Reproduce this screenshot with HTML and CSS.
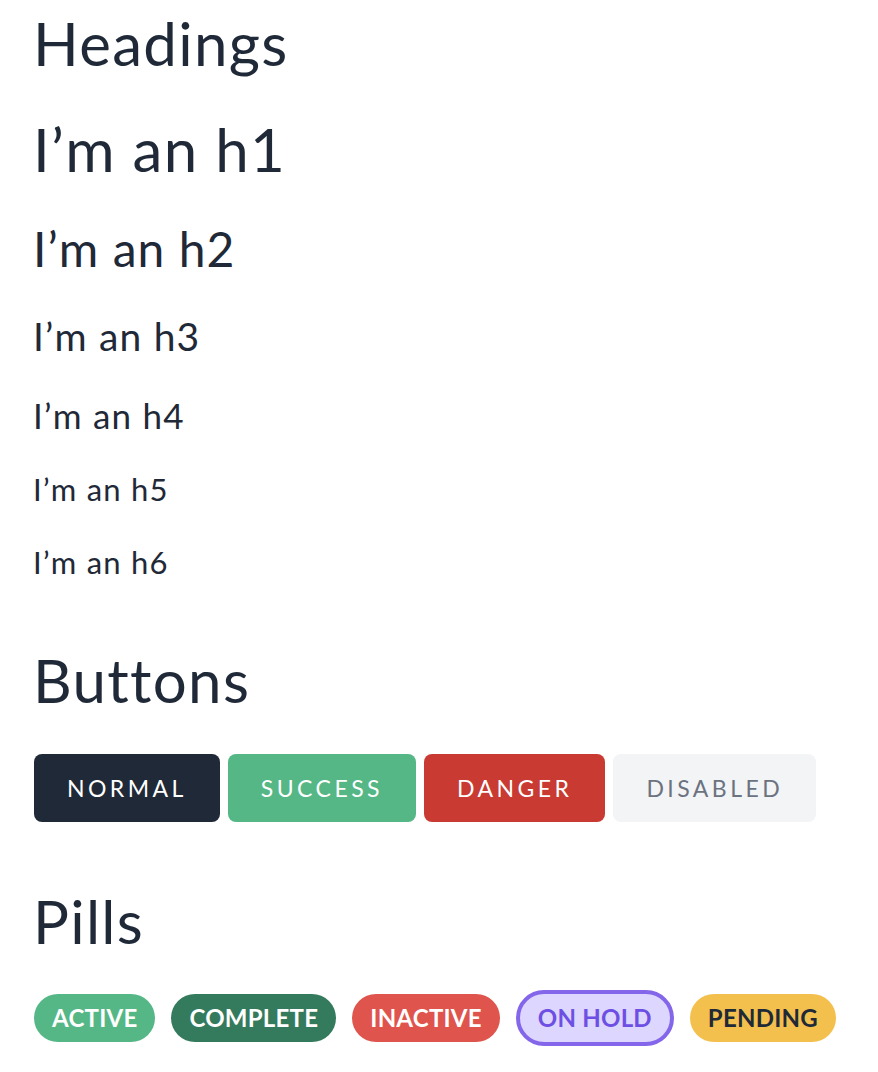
FILE: index.html
```html
<!DOCTYPE html>
<html lang="en">
<head>
<meta charset="utf-8">
<title>Style guide</title>
<link rel="stylesheet" href="styles.css">
</head>
<body>
<main class="page">
  <section class="section section-headings">
    <h2 class="section-title">Headings</h2>
    <div class="heading-list">
      <h1 class="hd hd-1">I’m an h1</h1>
      <h2 class="hd hd-2">I’m an h2</h2>
      <h3 class="hd hd-3">I’m an h3</h3>
      <h4 class="hd hd-4">I’m an h4</h4>
      <h5 class="hd hd-5">I’m an h5</h5>
      <h6 class="hd hd-6">I’m an h6</h6>
    </div>
  </section>

  <section class="section section-buttons">
    <h2 class="section-title">Buttons</h2>
    <div class="button-row">
      <button class="btn btn-normal">Normal</button>
      <button class="btn btn-success">Success</button>
      <button class="btn btn-danger">Danger</button>
      <button class="btn btn-disabled" disabled>Disabled</button>
    </div>
  </section>

  <section class="section section-pills">
    <h2 class="section-title">Pills</h2>
    <div class="pill-row">
      <span class="pill pill-active">Active</span>
      <span class="pill pill-complete">Complete</span>
      <span class="pill pill-inactive">Inactive</span>
      <span class="pill pill-hold">On hold</span>
      <span class="pill pill-pending">Pending</span>
    </div>
  </section>
</main>
</body>
</html>
```
FILE: styles.css
```css
* { box-sizing: border-box; }

html, body {
  margin: 0;
  background: #ffffff;
}

body {
  font-family: Lato, "Open Sans", sans-serif;
  color: #1f2937;
}

.page {
  padding: 7px 33px 0;
}

.section-title {
  margin: 0 0 34px;
  font-size: 60px;
  font-weight: 400;
  line-height: 1.2;
  letter-spacing: 0.022em;
}

.section-buttons,
.section-pills {
  margin-top: 63px;
}

.section-buttons .section-title {
  margin-bottom: 38px;
}

.section-pills .section-title {
  margin-bottom: 33px;
}

.heading-list {
  display: flex;
  flex-direction: column;
  gap: 35px;
}

.hd {
  margin: 0;
  font-weight: 400;
  line-height: 1.2;
  letter-spacing: 0.022em;
}

.hd-1 { font-size: 60px; }
.hd-2 { font-size: 48px; }
.hd-3 { font-size: 39px; letter-spacing: 0.03em; }
.hd-4 { font-size: 35px; letter-spacing: 0.035em; }
.hd-5 { font-size: 31px; letter-spacing: 0.04em; }
.hd-6 { font-size: 31px; letter-spacing: 0.04em; }

/* Buttons */
.button-row {
  display: flex;
  gap: 8px;
  padding-left: 1px;
}

.btn {
  height: 68px;
  padding: 0 33px;
  border: 0;
  border-radius: 8px;
  font-family: inherit;
  font-size: 23px;
  font-weight: 400;
  letter-spacing: 0.15em;
  text-transform: uppercase;
  color: #ffffff;
  cursor: pointer;
}

.btn-normal { background: #1f2937; }
.btn-success { background: #55b786; }
.btn-danger { background: #c83a32; }
.btn-disabled {
  background: #f3f4f6;
  color: #6b7280;
  cursor: default;
}

/* Pills */
.pill-row {
  display: flex;
  align-items: center;
  gap: 16px;
  padding-left: 1px;
}

.pill {
  display: inline-flex;
  align-items: center;
  height: 48px;
  padding: 0 18px;
  border-radius: 24px;
  font-size: 24px;
  font-weight: 700;
  letter-spacing: 0.01em;
  text-transform: uppercase;
  color: #ffffff;
}

.pill-active { background: #55b786; }
.pill-complete { background: #347a5d; }
.pill-inactive { background: #df544c; }
.pill-hold {
  height: 56px;
  border: 4px solid #8466ea;
  border-radius: 28px;
  background: #ddd6fe;
  color: #6d4fe3;
}
.pill-pending {
  background: #f3c04d;
  color: #1f2937;
}
```
